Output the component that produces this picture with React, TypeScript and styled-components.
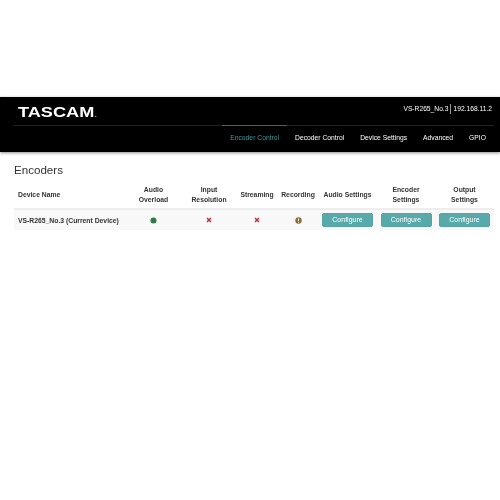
import React from "react";
import styled, { createGlobalStyle } from "styled-components";

const Global = createGlobalStyle`
  html, body { margin: 0; padding: 0; background: #fff; }
  body { font-family: "Liberation Sans", Arial, sans-serif; color: #333; }
`;
const Page = styled.div`
  width: 500px;
  height: 500px;
  padding-top: 97px;
  box-sizing: border-box;
  overflow: hidden;
  filter: blur(0.35px);
`;
const Header = styled.header`
  height: 55px;
  background: #000;
  box-shadow: 0 1px 3px rgba(0, 0, 0, 0.45);
  padding: 0 6px 0 14px;
  display: flex;
  flex-direction: column;
`;
const TopBar = styled.div`
  height: 29px;
  display: flex;
  justify-content: space-between;
  align-items: center;
  border-bottom: 1px solid #222;
`;
const Logo = styled.div`
  font-size: 15px;
  line-height: 16px;
  font-weight: 700;
  color: #fff;
  margin-left: 4px;
  margin-top: 4px;
  transform: scaleX(1.21);
  transform-origin: left center;
`;
const Dot = styled.span`
  font-size: 8px;
  color: #999;
`;
const DeviceInfo = styled.div`
  display: flex;
  align-items: center;
  font-size: 6.7px;
  color: #fff;
  margin-right: 2px;
  margin-top: -5px;
`;
const Sep = styled.span`
  width: 1px;
  height: 10px;
  background: #999;
  margin: 0 2px;
`;
const Nav = styled.nav`
  flex: 1;
  display: flex;
  justify-content: flex-end;
  align-items: center;
  padding-bottom: 2px;
`;
const NavItem = styled.a<{ $active?: boolean }>`
  font-size: 6.75px;
  line-height: 24px;
  padding: 0 8px;
  color: ${(p) => (p.$active ? "#3a9a9a" : "#fff")};
  border-top: 1px solid ${(p) => (p.$active ? "#2c6f6c" : "transparent")};
  margin-top: -1px;
`;
const Content = styled.main`
  padding: 10px 6px 0 14px;
`;
const Title = styled.h1`
  margin: 0 0 3px;
  font-size: 11.6px;
  line-height: 16px;
  font-weight: 400;
  color: #333;
`;
const Table = styled.table`
  width: 480px;
  border-collapse: collapse;
  table-layout: fixed;
`;
const Th = styled.th<{ $left?: boolean; $w: number }>`
  width: ${(p) => p.$w}px;
  height: 26px;
  font-size: 6.8px;
  line-height: 9.7px;
  font-weight: 700;
  color: #333;
  text-align: ${(p) => (p.$left ? "left" : "center")};
  padding: 1px 0 0 ${(p) => (p.$left ? "4px" : "0")};
  border-bottom: 2px solid #eee;
  white-space: nowrap;
`;
const Row = styled.tr`
  background: #f8f8f8;
`;
const Td = styled.td<{ $strong?: boolean }>`
  height: 20px;
  padding: 0 0 0 ${(p) => (p.$strong ? "4px" : "0")};
  font-size: 6.8px;
  font-weight: ${(p) => (p.$strong ? 700 : 400)};
  text-align: ${(p) => (p.$strong ? "left" : "center")};
  white-space: nowrap;
  & > svg { display: block; margin: 0 auto; }
  & > button { display: block; margin: 0 auto; }
`;
const Configure = styled.button`
  width: 51px;
  height: 14px;
  padding: 0;
  border: 1px solid #54a5a6;
  border-radius: 2px;
  background: #5aa9aa;
  color: #fff;
  font-family: inherit;
  font-size: 7px;
  line-height: 12px;
`;
const OkIcon = () => (
  <svg width="7" height="7" viewBox="0 0 7 7"><circle cx="3.5" cy="3.5" r="3" fill="#2f7d46" /></svg>
);
const CrossIcon = () => (
  <svg width="6" height="6" viewBox="0 0 6 6"><path d="M1 1l4 4M5 1L1 5" stroke="#b8323c" strokeWidth="1.5" /></svg>
);
const WarnIcon = () => (
  <svg width="7" height="7" viewBox="0 0 7 7">
    <circle cx="3.5" cy="3.5" r="3.2" fill="#8a6d3b" />
    <path d="M3.5 1.5v2.4M3.5 4.8v.8" stroke="#fff" strokeWidth="1" />
  </svg>
);

export default function App() {
  return (
    <Page>
      <Global />
      <Header>
        <TopBar>
          <Logo>TASCAM<Dot>.</Dot></Logo>
          <DeviceInfo>VS-R265_No.3<Sep />192.168.11.2</DeviceInfo>
        </TopBar>
        <Nav>
          <NavItem $active>Encoder Control</NavItem>
          <NavItem>Decoder Control</NavItem>
          <NavItem>Device Settings</NavItem>
          <NavItem>Advanced</NavItem>
          <NavItem>GPIO</NavItem>
        </Nav>
      </Header>
      <Content>
        <Title>Encoders</Title>
        <Table>
          <thead>
            <tr>
              <Th $left $w={107}>Device Name</Th>
              <Th $w={57}>Audio<br />Overload</Th>
              <Th $w={54}>Input<br />Resolution</Th>
              <Th $w={42}>Streaming</Th>
              <Th $w={40}>Recording</Th>
              <Th $w={59}>Audio Settings</Th>
              <Th $w={58}>Encoder<br />Settings</Th>
              <Th $w={59}>Output<br />Settings</Th>
            </tr>
          </thead>
          <tbody>
            <Row>
              <Td $strong>VS-R265_No.3 (Current Device)</Td>
              <Td><OkIcon /></Td>
              <Td><CrossIcon /></Td>
              <Td><CrossIcon /></Td>
              <Td><WarnIcon /></Td>
              <Td><Configure>Configure</Configure></Td>
              <Td><Configure>Configure</Configure></Td>
              <Td><Configure>Configure</Configure></Td>
            </Row>
          </tbody>
        </Table>
      </Content>
    </Page>
  );
}
